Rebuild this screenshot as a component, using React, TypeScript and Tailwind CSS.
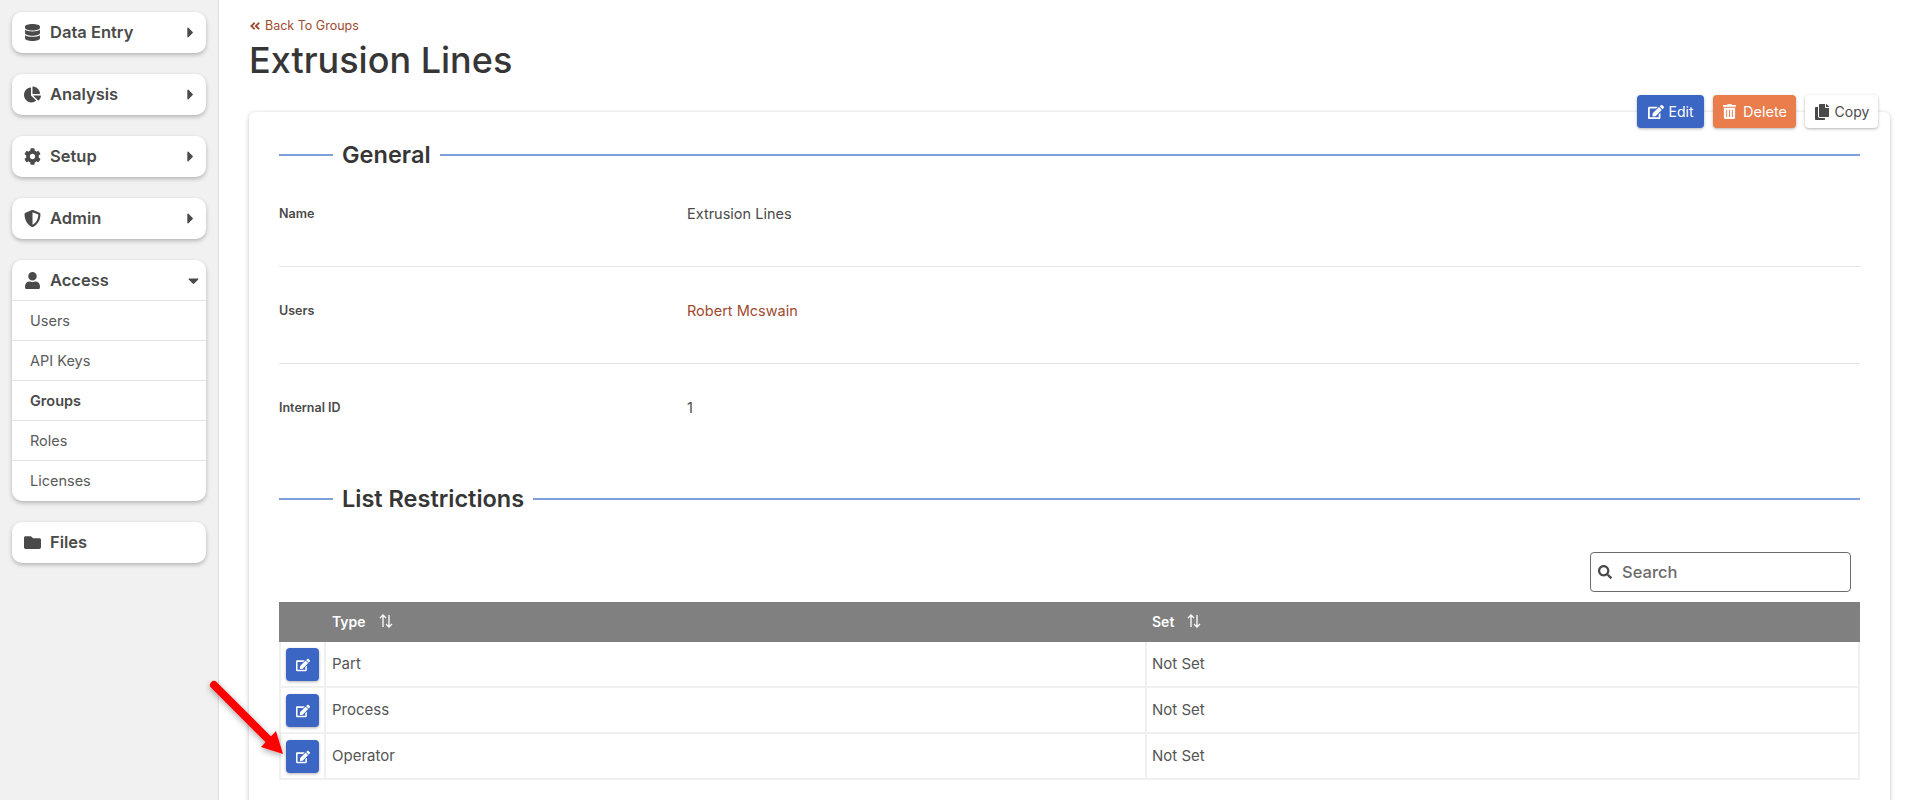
import { FaAngleDoubleLeft, FaCaretDown, FaCaretRight, FaChartPie, FaCog, FaCopy, FaDatabase, FaEdit, FaFolder, FaSearch, FaShieldAlt, FaTrashAlt, FaUser } from "react-icons/fa";
import type { ReactNode } from "react";

function SideCard({ icon, label, caret = true }: { icon: ReactNode; label: string; caret?: boolean }) {
  return (
    <div className="flex h-[41px] items-center rounded-[10px] bg-white pl-3 pr-[7px] shadow-[0_2px_4px_rgba(0,0,0,0.25)]">
      <div className="flex flex-1 items-center gap-[9px] text-[16.5px] font-semibold text-[#4a4a4a]">
        {icon}
        <span>{label}</span>
      </div>
      {caret && <FaCaretRight className="text-[17px] text-[#4a4a4a]" />}
    </div>
  );
}

function SectionTitle({ title }: { title: string }) {
  return (
    <div className="flex items-center">
      <div className="h-[2px] w-[54px] bg-[#7f9fdc]" />
      <h2 className="px-[9px] text-[23.5px] leading-[30px] font-semibold text-[#363636]">{title}</h2>
      <div className="h-[2px] flex-1 bg-[#7f9fdc]" />
    </div>
  );
}

function Field({ label, children, border = true }: { label: string; children: ReactNode; border?: boolean }) {
  return (
    <div className={`flex h-[97px] items-start pt-[34px] ${border ? "border-b border-[#e4e4e4]" : ""}`}>
      <div className="w-[408px] text-[12.5px] leading-[20px] font-semibold text-[#4a4a4a]">{label}</div>
      <div className="text-[14.5px] leading-[20px] text-[#4a4a4a]">{children}</div>
    </div>
  );
}

function SortArrows() {
  return (
    <svg width="16" height="16" viewBox="0 0 16 16" fill="none" stroke="currentColor" strokeWidth="1.3" className="ml-[12px]">
      <path d="M5 14V2M2 5l3-3 3 3" />
      <path d="M11 2v12M8 11l3 3 3-3" />
    </svg>
  );
}

function Row({ type }: { type: string }) {
  return (
    <div className="flex h-[46px] border-b-2 border-[#f0f0f0] text-[15px] text-[#555]">
      <div className="flex w-[45px] items-center justify-center border-r-2 border-[#f0f0f0] pt-[1px]">
        <button className="flex h-[33px] w-[33px] items-center justify-center rounded-[4px] bg-[#3b66c4] text-[14px] text-white shadow-[0_1px_3px_rgba(0,0,0,0.3)]">
          <FaEdit />
        </button>
      </div>
      <div className="flex w-[821px] items-center border-r-2 border-[#f0f0f0] pl-[6px]">{type}</div>
      <div className="flex flex-1 items-center pl-[5px]">Not Set</div>
    </div>
  );
}

export default function App() {
  return (
    <div className="relative flex h-screen overflow-hidden bg-white font-['Inter',sans-serif]">
      <aside className="flex w-[219px] shrink-0 flex-col gap-[21px] border-r border-[#dedede] bg-[#f1f1f1] py-3 pl-3 pr-3">
        <SideCard icon={<FaDatabase className="text-[17px]" />} label="Data Entry" />
        <SideCard icon={<FaChartPie className="text-[17px]" />} label="Analysis" />
        <SideCard icon={<FaCog className="text-[17px]" />} label="Setup" />
        <SideCard icon={<FaShieldAlt className="text-[17px]" />} label="Admin" />
        <div className="overflow-hidden rounded-[10px] bg-white shadow-[0_2px_4px_rgba(0,0,0,0.25)]">
          <div className="flex h-[41px] items-center border-b border-[#e4e4e4] pl-3 pr-[4px]">
            <div className="flex flex-1 items-center gap-[9px] text-[16.5px] font-semibold text-[#4a4a4a]">
              <FaUser className="text-[17px]" />
              <span>Access</span>
            </div>
            <FaCaretDown className="text-[17px] text-[#4a4a4a]" />
          </div>
          {["Users", "API Keys", "Groups", "Roles", "Licenses"].map((item, i) => (
            <div
              key={item}
              className={`flex h-[40px] items-center pl-[18px] text-[14.5px] ${i < 4 ? "border-b border-[#e4e4e4]" : ""} ${item === "Groups" ? "font-semibold text-[#4a4a4a]" : "text-[#5a5a5a]"}`}
            >
              {item}
            </div>
          ))}
        </div>
        <SideCard icon={<FaFolder className="text-[17px]" />} label="Files" caret={false} />
      </aside>

      <main className="min-w-0 flex-1 pl-[30px] pr-[30px] pt-[17px]">
        <a className="flex items-center gap-[4px] text-[12.5px] leading-[17px] text-[#a0492f]">
          <FaAngleDoubleLeft className="text-[12px]" />
          Back To Groups
        </a>
        <h1 className="mt-[4px] text-[36px] leading-[44px] font-medium text-[#363636]">Extrusion Lines</h1>

        <div className="relative mt-[30px] rounded-[6px] bg-white px-[30px] pb-[60px] pt-[28px] shadow-[0_1px_4px_rgba(0,0,0,0.25)]">
          <div className="absolute right-[12px] top-[-17px] flex gap-[9px] text-[14px]">
            <button className="flex h-[33px] w-[67px] items-center justify-center gap-[5px] rounded-[4px] bg-[#3b66c4] text-white shadow-[0_1px_3px_rgba(0,0,0,0.3)]">
              <FaEdit className="text-[16px]" /> Edit
            </button>
            <button className="flex h-[33px] w-[83px] items-center justify-center gap-[6px] rounded-[4px] bg-[#e97d4c] text-[14.5px] text-white shadow-[0_1px_3px_rgba(0,0,0,0.3)]">
              <FaTrashAlt className="text-[15px]" /> Delete
            </button>
            <button className="flex h-[33px] w-[73px] items-center justify-center gap-[5px] rounded-[4px] bg-white text-[#4a4a4a] shadow-[0_1px_3px_rgba(0,0,0,0.3)]">
              <FaCopy className="text-[16px]" /> Copy
            </button>
          </div>

          <SectionTitle title="General" />
          <Field label="Name">Extrusion Lines</Field>
          <Field label="Users">
            <span className="text-[#a0492f]">Robert Mcswain</span>
          </Field>
          <Field label="Internal ID" border={false}>1</Field>

          <div className="mt-[23px]">
            <SectionTitle title="List Restrictions" />
          </div>

          <div className="mt-[38px] flex justify-end pr-[9px]">
            <div className="flex h-[40px] w-[261px] items-center gap-[10px] rounded-[4px] border border-[#6b6b6b] pl-[7px] text-[16.5px] font-medium text-[#6b6b6b]">
              <FaSearch className="text-[14px] text-[#4a4a4a]" />
              Search
            </div>
          </div>

          <div className="mt-[10px]">
            <div className="flex h-[40px] items-center bg-[#808080] pb-[2px] text-[14px] font-semibold text-white">
              <div className="flex w-[47px] shrink-0" />
              <div className="flex w-[821px] items-center pl-[6px]">
                Type
                <SortArrows />
              </div>
              <div className="flex flex-1 items-center pl-[5px]">
                Set
                <SortArrows />
              </div>
            </div>
            <div className="border-l-2 border-r-2 border-[#f0f0f0]">
              <Row type="Part" />
              <Row type="Process" />
              <Row type="Operator" />
            </div>
          </div>
        </div>
      </main>

      <svg className="pointer-events-none absolute left-[205px] top-[680px]" width="90" height="85" viewBox="0 0 90 85">
        <defs>
          <filter id="arrow-shadow" x="-20%" y="-20%" width="140%" height="140%">
            <feDropShadow dx="0" dy="2" stdDeviation="3" floodColor="#000" floodOpacity="0.35" />
          </filter>
        </defs>
        <g filter="url(#arrow-shadow)">
          <path d="M9 5L64 60" stroke="#fe0000" strokeWidth="8" strokeLinecap="round" />
          <path d="M78 74L56 67L71 51Z" fill="#fe0000" />
        </g>
      </svg>
    </div>
  );
}
